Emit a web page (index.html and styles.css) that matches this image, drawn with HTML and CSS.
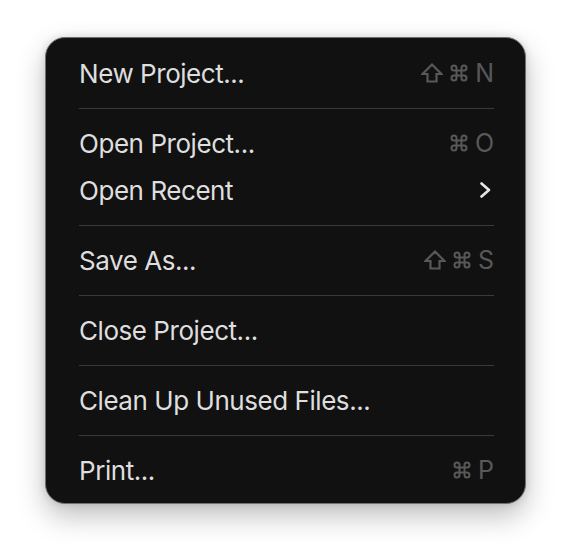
FILE: index.html
```html
<!DOCTYPE html>
<html>
<head>
<meta charset="utf-8">
<link rel="stylesheet" href="styles.css">
</head>
<body>
<div class="menu">
  <div class="item"><span class="label">New Project...</span>
    <span class="keys">
      <svg class="shift" viewBox="0 0 22 20"><path d="M11 1.5 L20.5 11 H15.5 V18.5 H6.5 V11 H1.5 Z"/></svg>
      <svg class="cmd" viewBox="0 0 20 20"><path d="M7.5 7.5 V5 A2.5 2.5 0 1 0 5 7.5 H15 A2.5 2.5 0 1 0 12.5 5 V15 A2.5 2.5 0 1 0 15 12.5 H5 A2.5 2.5 0 1 0 7.5 15 Z"/></svg>
      <span class="key">N</span>
    </span>
  </div>
  <div class="sep"></div>
  <div class="item"><span class="label">Open Project...</span>
    <span class="keys">
      <svg class="cmd" viewBox="0 0 20 20"><path d="M7.5 7.5 V5 A2.5 2.5 0 1 0 5 7.5 H15 A2.5 2.5 0 1 0 12.5 5 V15 A2.5 2.5 0 1 0 15 12.5 H5 A2.5 2.5 0 1 0 7.5 15 Z"/></svg>
      <span class="key">O</span>
    </span>
  </div>
  <div class="item"><span class="label">Open Recent</span>
    <svg class="chev" viewBox="0 0 11 16"><path d="M1.5 1.5 L9 8 L1.5 14.5"/></svg>
  </div>
  <div class="sep"></div>
  <div class="item"><span class="label">Save As...</span>
    <span class="keys">
      <svg class="shift" viewBox="0 0 22 20"><path d="M11 1.5 L20.5 11 H15.5 V18.5 H6.5 V11 H1.5 Z"/></svg>
      <svg class="cmd" viewBox="0 0 20 20"><path d="M7.5 7.5 V5 A2.5 2.5 0 1 0 5 7.5 H15 A2.5 2.5 0 1 0 12.5 5 V15 A2.5 2.5 0 1 0 15 12.5 H5 A2.5 2.5 0 1 0 7.5 15 Z"/></svg>
      <span class="key">S</span>
    </span>
  </div>
  <div class="sep"></div>
  <div class="item"><span class="label">Close Project...</span></div>
  <div class="sep"></div>
  <div class="item"><span class="label">Clean Up Unused Files...</span></div>
  <div class="sep"></div>
  <div class="item"><span class="label">Print...</span>
    <span class="keys">
      <svg class="cmd" viewBox="0 0 20 20"><path d="M7.5 7.5 V5 A2.5 2.5 0 1 0 5 7.5 H15 A2.5 2.5 0 1 0 12.5 5 V15 A2.5 2.5 0 1 0 15 12.5 H5 A2.5 2.5 0 1 0 7.5 15 Z"/></svg>
      <span class="key">P</span>
    </span>
  </div>
</div>
</body>
</html>
```

FILE: styles.css
```css
html, body {
  margin: 0;
  padding: 0;
  background: #ffffff;
}
body {
  box-sizing: border-box;
  min-height: 558px;
  padding: 37px 0 54px 45px;
  font-family: Inter, "Noto Sans", sans-serif;
}
.menu {
  box-sizing: border-box;
  width: 481px;
  height: 467px;
  background: #111111;
  border: 1.5px solid #707070;
  border-radius: 20px;
  padding: 11.5px 31px 8.5px 33px;
  box-shadow: 0 12px 28px rgba(0, 0, 0, 0.25), 0 0 8px rgba(0, 0, 0, 0.12);
}
.item {
  height: 47px;
  display: flex;
  align-items: center;
  justify-content: space-between;
}
.label {
  color: #dedede;
  font-size: 26px;
  letter-spacing: -0.45px;
}
.keys {
  display: flex;
  align-items: center;
  gap: 6px;
  color: #585858;
}
.key {
  font-size: 25px;
  color: #585858;
}
.shift {
  width: 22px;
  height: 20px;
  fill: none;
  stroke: #585858;
  stroke-width: 2.2;
  stroke-linejoin: miter;
}
.cmd {
  width: 20px;
  height: 20px;
  fill: none;
  stroke: #585858;
  stroke-width: 2;
}
.chev {
  width: 11px;
  height: 16px;
  margin-right: 3px;
  fill: none;
  stroke: #e6e6e6;
  stroke-width: 2.6;
  stroke-linecap: round;
  stroke-linejoin: round;
}
.sep {
  height: 1px;
  background: #3a3a3a;
  margin: 11px 0;
}
```
